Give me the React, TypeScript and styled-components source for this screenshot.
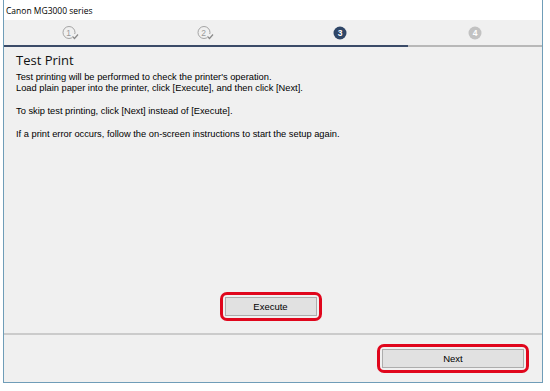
import React from 'react';
import styled, { createGlobalStyle } from 'styled-components';

const GlobalStyle = createGlobalStyle`
  html, body {
    margin: 0;
    padding: 0;
    background: #ffffff;
  }
`;

const Window = styled.div`
  box-sizing: border-box;
  margin-left: 3px;
  width: 540px;
  height: 383px;
  border: 1px solid #6f9db8;
  border-top: none;
  display: flex;
  flex-direction: column;
  background: #f0f0f0;
`;

const TitleBar = styled.div`
  height: 20px;
  background: #ffffff;
  display: flex;
  align-items: center;
  padding-left: 2px;
  font-family: 'Open Sans', 'Noto Sans', sans-serif;
  font-size: 8.5px;
  color: #000;
`;

const StepBar = styled.div`
  height: 25px;
  display: grid;
  grid-template-columns: repeat(4, 1fr);
  align-items: center;
  justify-items: center;
  background: #f0f0f0;
`;

const Progress = styled.div`
  height: 2px;
  display: grid;
  grid-template-columns: 3fr 1fr;
`;

const ProgressPart = styled.div<{ $done: boolean }>`
  background: ${(p) => (p.$done ? '#3b4b68' : '#b8b8b8')};
`;

const Content = styled.div`
  flex: 1;
  display: flex;
  flex-direction: column;
  padding: 5px 12px 12px;
`;

const Heading = styled.div`
  font-family: 'Open Sans', 'Noto Sans', sans-serif;
  font-size: 13px;
  color: #111;
  line-height: 17px;
`;

const Body = styled.div`
  margin-top: 3px;
  font-family: 'Liberation Sans', Arial, sans-serif;
  font-size: 9.3px;
  line-height: 11px;
  color: #000;

  p {
    margin: 0 0 12px;
  }
`;

const ExecuteArea = styled.div`
  margin-top: auto;
  display: flex;
  justify-content: center;
  padding-right: 5px;
`;

const Separator = styled.div`
  height: 2px;
  background: #cbcbcb;
`;

const Footer = styled.div`
  height: 47px;
  display: flex;
  align-items: center;
  justify-content: flex-end;
  padding-right: 13px;
`;

const RedFrame = styled.div`
  border: 3px solid #e0061c;
  border-radius: 7px;
  padding: 2px;
  display: flex;
`;

const Button = styled.button<{ $width: number }>`
  box-sizing: border-box;
  width: ${(p) => p.$width}px;
  height: 19px;
  background: #e1e1e1;
  border: 1px solid #adadad;
  font-family: 'Liberation Sans', Arial, sans-serif;
  font-size: 9.5px;
  color: #000;
  padding: 0;
`;

const DoneStep: React.FC<{ n: number }> = ({ n }) => (
  <svg width="20" height="16" viewBox="0 0 20 16">
    <circle cx="8" cy="7.5" r="6" fill="none" stroke="#a4a4a4" strokeWidth="1" />
    <text
      x="7.5"
      y="10.5"
      textAnchor="middle"
      fontFamily="'Liberation Sans', Arial, sans-serif"
      fontSize="8.5"
      fill="#9a9a9a"
    >
      {n}
    </text>
    <rect x="11" y="9" width="7" height="6" fill="#f0f0f0" />
    <path d="M11.5 11.5 L13.5 13.5 L17 9.5" fill="none" stroke="#8a8a8a" strokeWidth="1.2" />
  </svg>
);

const FilledStep: React.FC<{ n: number; color: string }> = ({ n, color }) => (
  <svg width="16" height="16" viewBox="0 0 16 16">
    <circle cx="8" cy="8" r="6.5" fill={color} />
    <text
      x="8"
      y="11"
      textAnchor="middle"
      fontFamily="'Liberation Sans', Arial, sans-serif"
      fontWeight="bold"
      fontSize="8.5"
      fill="#ffffff"
    >
      {n}
    </text>
  </svg>
);

const App: React.FC = () => (
  <>
    <GlobalStyle />
    <Window>
      <TitleBar>Canon MG3000 series</TitleBar>
      <StepBar>
        <DoneStep n={1} />
        <DoneStep n={2} />
        <FilledStep n={3} color="#2f4667" />
        <FilledStep n={4} color="#c2c2c2" />
      </StepBar>
      <Progress>
        <ProgressPart $done />
        <ProgressPart $done={false} />
      </Progress>
      <Content>
        <Heading>Test Print</Heading>
        <Body>
          <p>
            Test printing will be performed to check the printer's operation.
            <br />
            Load plain paper into the printer, click [Execute], and then click [Next].
          </p>
          <p>To skip test printing, click [Next] instead of [Execute].</p>
          <p>If a print error occurs, follow the on-screen instructions to start the setup again.</p>
        </Body>
        <ExecuteArea>
          <RedFrame>
            <Button $width={92}>Execute</Button>
          </RedFrame>
        </ExecuteArea>
      </Content>
      <Separator />
      <Footer>
        <RedFrame>
          <Button $width={142}>Next</Button>
        </RedFrame>
      </Footer>
    </Window>
  </>
);

export default App;
